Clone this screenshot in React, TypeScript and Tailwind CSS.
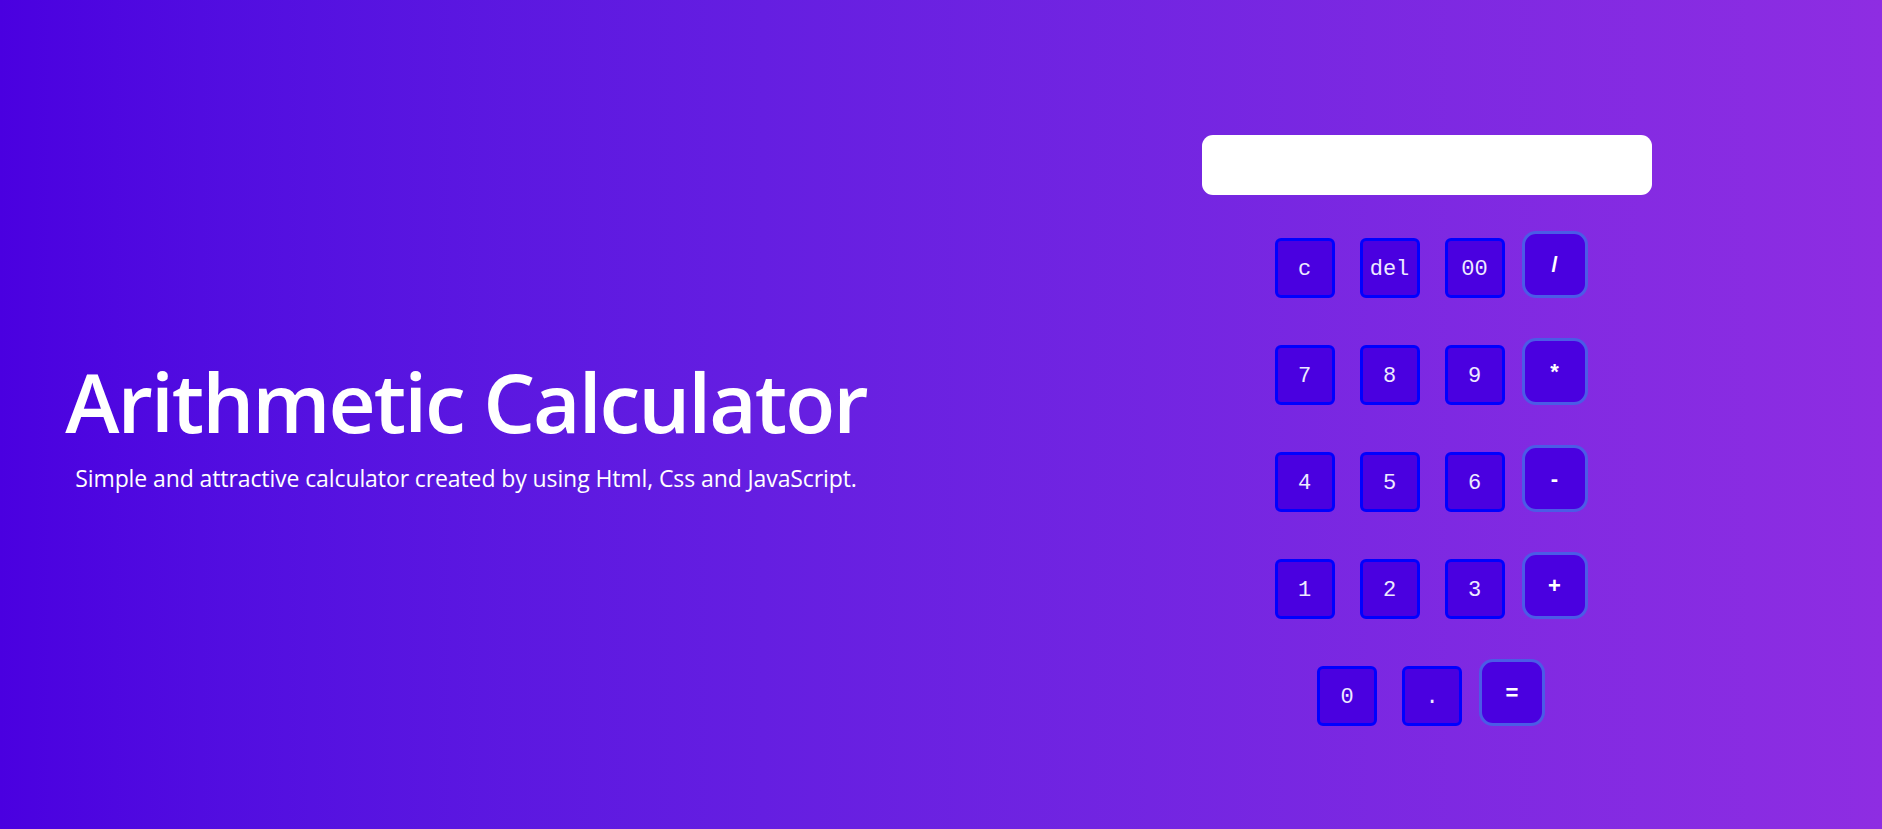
import React from 'react';

const rows: { nums: string[]; op: string }[] = [
    { nums: ['c', 'del', '00'], op: '/' },
    { nums: ['7', '8', '9'], op: '*' },
    { nums: ['4', '5', '6'], op: '-' },
    { nums: ['1', '2', '3'], op: '+' },
    { nums: ['0', '.'], op: '=' },
];

const NumKey = ({ label }: { label: string }) => (
    <button className="w-[60px] h-[60px] rounded-[6px] border-[3px] border-[#0000ff] bg-[#4a00e0] text-[#eeeaff] text-[22px] pt-[3px] font-['Liberation_Mono',monospace] flex items-center justify-center leading-none">
        {label}
    </button>
);

const OpKey = ({ label }: { label: string }) => (
    <button className="w-[66px] h-[67px] rounded-[14px] border-[3px] border-[#4b5be6] bg-[#4a00e0] text-white text-[22px] font-bold font-['Liberation_Sans',sans-serif] flex items-center justify-center leading-none">
        {label}
    </button>
);

export default function App() {
    return (
        <div className="w-full h-[829px] bg-gradient-to-r from-[#4a00e0] to-[#8e2de2] flex overflow-hidden">
            <div className="w-[932px] flex flex-col items-center pt-[352px] text-white">
                <h1 className="text-[82px] leading-[1.2] font-semibold tracking-[-2px] font-['Open_Sans',sans-serif]">Arithmetic Calculator</h1>
                <p className="text-[23px] mt-[11px] tracking-[-0.1px] font-['Open_Sans',sans-serif]">Simple and attractive calculator created by using Html, Css and JavaScript.</p>
            </div>
            <div className="pt-[135px] pl-[270px]">
                <div className="w-[450px] h-[60px] bg-white rounded-[11px]" />
                <div className="pl-[8px] mt-[36px] flex flex-col gap-[40px]">
                    {rows.map((row, i) => (
                        <div key={i} className="flex items-end justify-center">
                            {row.nums.map((n, j) => (
                                <div key={n} className={j === 0 ? '' : 'ml-[25px]'}>
                                    <NumKey label={n} />
                                </div>
                            ))}
                            <div className="ml-[17px]">
                                <OpKey label={row.op} />
                            </div>
                        </div>
                    ))}
                </div>
            </div>
        </div>
    );
}
